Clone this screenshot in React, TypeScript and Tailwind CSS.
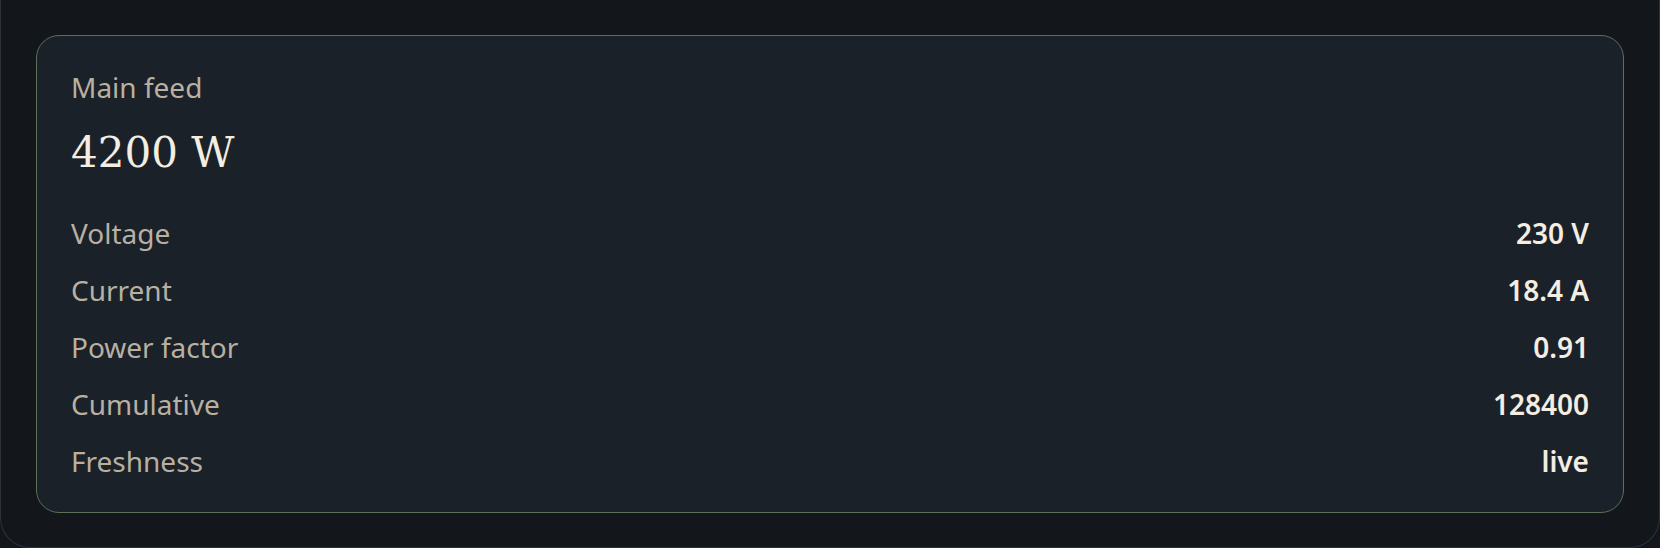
const rows: [string, string][] = [
  ["Voltage", "230 V"],
  ["Current", "18.4 A"],
  ["Power factor", "0.91"],
  ["Cumulative", "128400"],
  ["Freshness", "live"],
];

export default function App() {
  return (
    <div className="w-[1660px] h-[548px] bg-[#13161b] overflow-hidden">
      <div className="h-[548px] border-x border-b border-[#2c333b] rounded-b-[30px] px-[35px] pt-[35px]">
        <div
          className="rounded-[23px] border border-[#5b7059] bg-[#1b2129] px-[34px] pt-[31px] pb-[23px]"
          style={{ fontFamily: '"Noto Sans", Inter, sans-serif' }}
        >
          <div className="text-[28px] leading-[40px] text-[#b8b0a2]">Main feed</div>
          <div
            className="mt-[18px] text-[42px] leading-[56px] text-[#f3ede2]"
            style={{ fontFamily: '"DejaVu Serif", "Liberation Serif", serif' }}
          >
            4200 W
          </div>
          <div className="mt-[23px] flex flex-col">
            {rows.map(([label, value]) => (
              <div key={label} className="flex items-center justify-between h-[57px]">
                <span className="text-[28px] text-[#b8b0a2]">{label}</span>
                <span className="text-[28px] font-semibold text-[#f3ede2]">{value}</span>
              </div>
            ))}
          </div>
        </div>
      </div>
    </div>
  );
}
